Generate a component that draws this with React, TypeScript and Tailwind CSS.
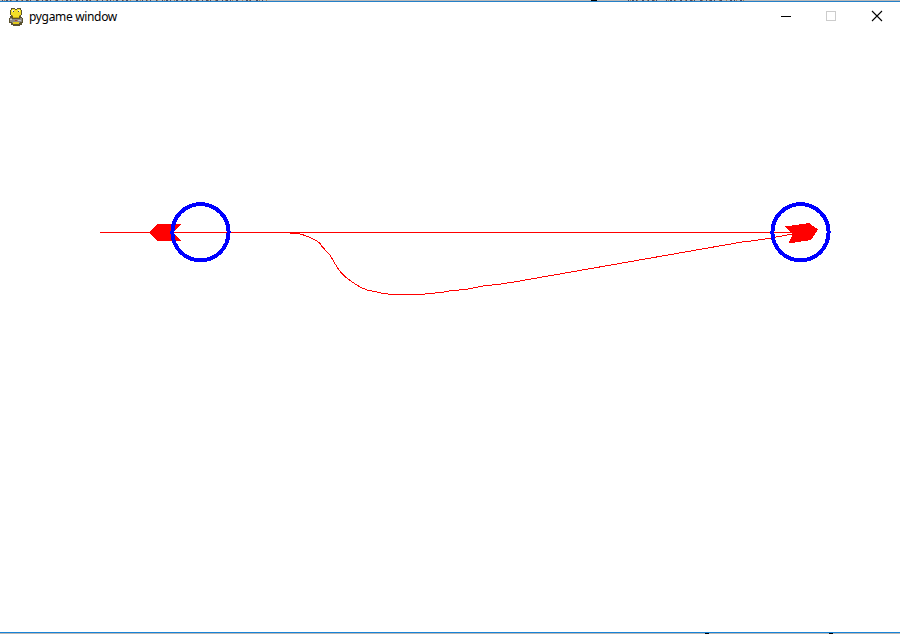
const fragments = [
  { x: 2, w: 265 },
  { x: 628, w: 34 },
  { x: 666, w: 80 },
];

function SnakeIcon() {
  return (
    <svg width="16" height="18" viewBox="0 0 16 18" shapeRendering="crispEdges" className="shrink-0">
      <path d="M3 0h4v1h2V0h4v2h1v5h-1v2h1v1h1v5h-1v2h-2v1H5v-1H3v-2H1v-5h1V8h1V7H2V2h1z" fill="#5a5230" />
      <path d="M4 1h3v1h2V1h3v1h1v5h-1v1h-1v2H5V8H4V7H3V2h1z" fill="#f2de28" />
      <path d="M4 2h2v2H4zM10 2h2v2h-2z" fill="#fff6b4" />
      <path d="M5 3h1v1H5zM10 3h1v1h-1z" fill="#444" />
      <path d="M4 7h1v1H4zM11 7h1v1h-1zM5 9h6v1H5z" fill="#c3a810" />
      <path d="M2 10h2v1h8v-1h2v4h-2v1H4v-1H2z" fill="#8d8a86" />
      <path d="M2 11h2v1H2zM10 12h3v1h-3z" fill="#cbc8c4" />
      <path d="M7 12h2v1H7z" fill="#a83a38" />
      <path d="M5 14h6v2H5z" fill="#e2c91c" />
    </svg>
  );
}

function TitleBar() {
  return (
    <header className="flex h-[30px] items-center bg-white pl-2">
      <SnakeIcon />
      <span className="ml-[5px] whitespace-nowrap pb-px font-['Noto_Sans','Open_Sans',sans-serif] text-[12px] leading-[19px] tracking-[-0.33px] text-black">
        pygame window
      </span>
      <svg width="120" height="30" className="ml-auto" shapeRendering="crispEdges" fill="none">
        <path d="M1 14.5h10" stroke="#000" />
        <rect x="46.5" y="9.5" width="9" height="9" stroke="#ccc" />
        <path d="M92 9l10 10M102 9l-10 10" stroke="#000" shapeRendering="auto" strokeWidth="1.1" />
      </svg>
    </header>
  );
}

function Track() {
  return (
    <svg width="900" height="600" viewBox="0 32 900 600" className="block" shapeRendering="crispEdges">
      <g fill="none" stroke="#f00" strokeWidth="1">
        <path d="M100 232.5H801" />
        <path d="M290 233.4L299 233.6L302 234.5L310 237.3L316 240.4L320 243.4L322 246.5L330 255L334 262L337 267L341 272.5L346 277.4L353 282.6L361 287.5L367 290L376 291.8L382 293.2L392 294.5H420L432 293.3L442 292.4L450 290.8L466 289.4L484 285.8L500 284.2L518 281.3L742 242L753 240.8L771 238L793 234" />
      </g>
      <g fill="#f00">
        <path d="M149.5 232.5L157.5 224H181.5L173 232.5L181.5 241H157.5Z" />
        <path d="M785 226.5L809 223L818 229.5L811 240L788 243.5L793 234Z" />
      </g>
      <g fill="none" stroke="#00f" strokeWidth="4">
        <circle cx="200.5" cy="232.2" r="28.1" />
        <circle cx="800.5" cy="232.2" r="28.1" />
      </g>
    </svg>
  );
}

export default function App() {
  return (
    <main className="flex h-[634px] w-[900px] flex-col overflow-hidden bg-white">
      <svg width="900" height="1" className="block shrink-0" shapeRendering="crispEdges">
        <rect width="900" height="1" fill="#b9b9b9" />
        {fragments.map((f) => (
          <g key={f.x} strokeWidth="1">
            <path d={`M${f.x} .5h${f.w}`} stroke="#4a4a60" strokeDasharray="1 3 2 2 1 5 2 4" />
            <path d={`M${f.x + 2} .5h${f.w - 2}`} stroke="#a08058" strokeDasharray="1 6 1 9" />
          </g>
        ))}
        <rect x="591" width="6" height="1" fill="#000" />
      </svg>
      <div className="h-px shrink-0 bg-[#2580c8]" />
      <TitleBar />
      <Track />
      <div className="h-px shrink-0 bg-[#1883d7]" />
      <svg width="900" height="1" className="block shrink-0" shapeRendering="crispEdges">
        <rect width="900" height="1" fill="#b9b9b9" />
        <path d="M705 .5h4M829 .5h4" stroke="#000" />
      </svg>
    </main>
  );
}
